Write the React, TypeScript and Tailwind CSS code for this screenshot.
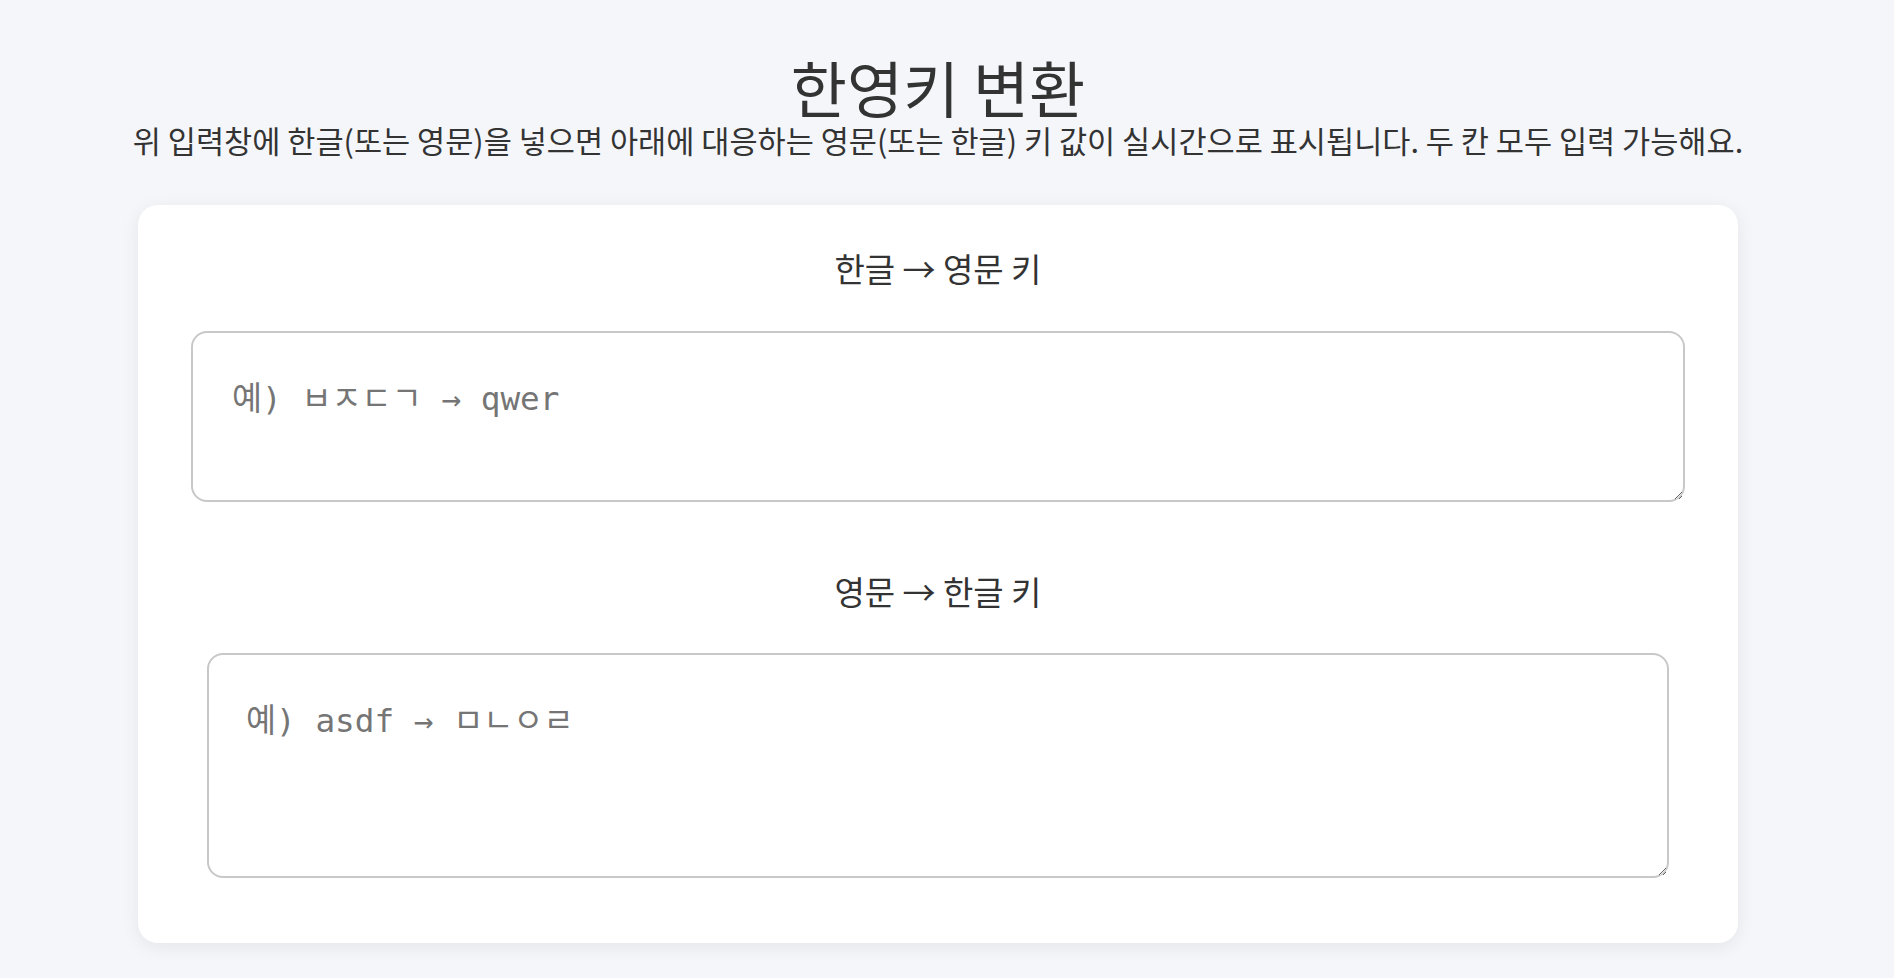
import { useState } from 'react'

export default function App() {
  const [ko, setKo] = useState('')
  const [en, setEn] = useState('')

  return (
    <div className="min-h-screen bg-[#f5f6fa] pr-[18px] pt-[54px] pb-[34px] text-[#333] font-['Noto_Sans_CJK_KR',sans-serif]">
      <div className="flex flex-col items-center">
        <h1 className="text-[61px] leading-[66px] font-normal">한영키 변환</h1>
        <p className="text-[30.6px] leading-[40px]">
          위 입력창에 한글(또는 영문)을 넣으면 아래에 대응하는 영문(또는 한글) 키 값이 실시간으로 표시됩니다. 두 칸 모두 입력 가능해요.
        </p>
      </div>

      <section className="mx-auto mt-[45px] w-[1600px] rounded-[20px] bg-white pt-[43px] pb-[65px] shadow-[0_4px_18px_rgba(0,0,0,0.07)]">
        <h2 className="text-center text-[33px] leading-[40px]">한글 → 영문 키</h2>
        <textarea
          value={ko}
          onChange={(e) => setKo(e.target.value)}
          placeholder="예) ㅂㅈㄷㄱ → qwer"
          className="mx-auto mt-[43px] block h-[171px] w-[1494px] rounded-[16px] border-2 border-[#c8c8c8] bg-white px-[39px] pt-[42px] pb-[30px] font-['DejaVu_Sans_Mono','Noto_Sans_Mono_CJK_KR','Noto_Sans_CJK_KR',monospace] text-[32.7px] text-[#333] placeholder:text-[#757575] outline-none"
        />

        <h2 className="mt-[69px] text-center text-[33px] leading-[40px]">영문 → 한글 키</h2>
        <textarea
          value={en}
          onChange={(e) => setEn(e.target.value)}
          placeholder="예) asdf → ㅁㄴㅇㄹ"
          className="mx-auto mt-[42px] block h-[225px] w-[1462px] rounded-[16px] border-2 border-[#c8c8c8] bg-white px-[37px] pt-[42px] pb-[30px] font-['DejaVu_Sans_Mono','Noto_Sans_Mono_CJK_KR','Noto_Sans_CJK_KR',monospace] text-[32.7px] text-[#333] placeholder:text-[#757575] outline-none"
        />
      </section>
    </div>
  )
}
